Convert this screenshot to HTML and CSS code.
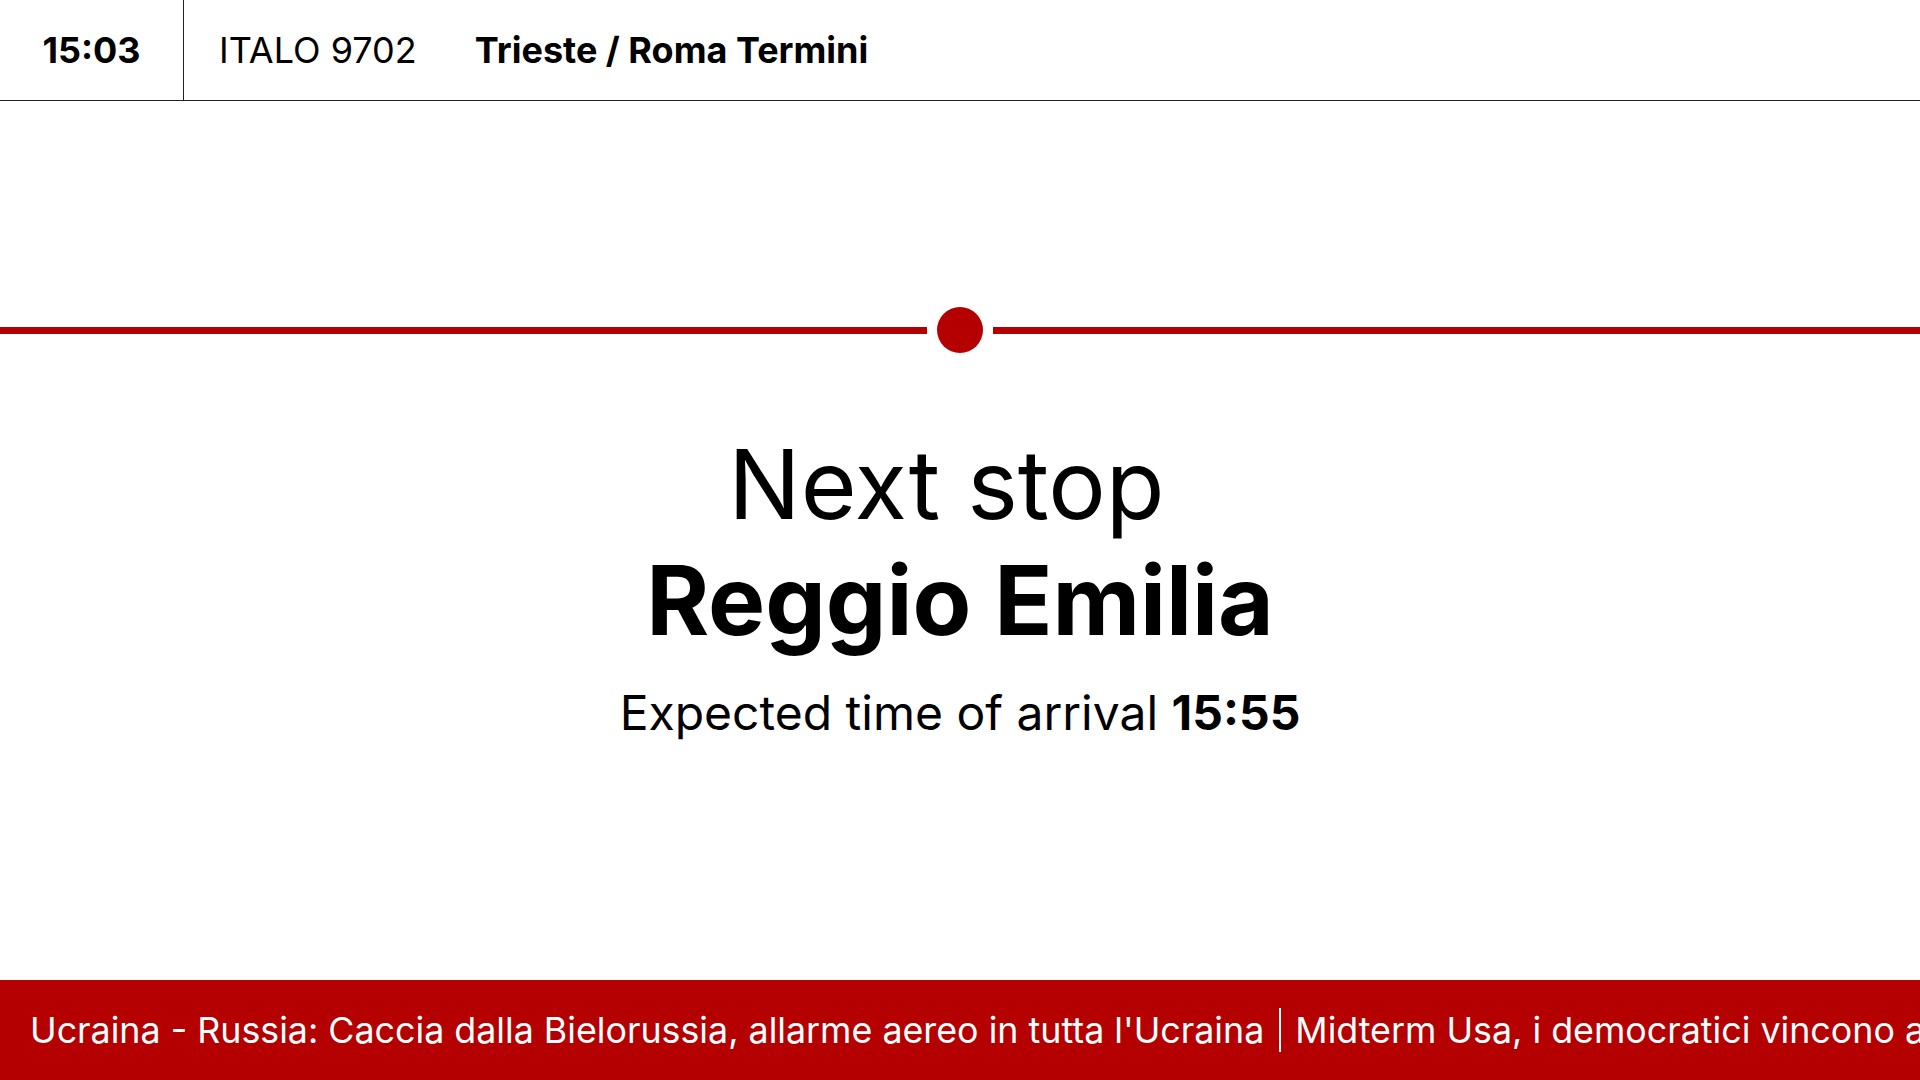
FILE: index.html
```html
<!DOCTYPE html>
<html lang="it">
<head>
<meta charset="utf-8">
<title>Next stop</title>
<link rel="stylesheet" href="styles.css">
</head>
<body>
<div class="screen">
  <header class="topbar">
    <div class="clock">15:03</div>
    <div class="train">
      <span class="train-no">ITALO 9702</span>
      <span class="route">Trieste / Roma Termini</span>
    </div>
  </header>
  <main class="main">
    <div class="track">
      <div class="track-line"></div>
      <div class="track-dot"></div>
      <div class="track-line"></div>
    </div>
    <div class="next">
      <div class="next-label">Next stop</div>
      <div class="next-name">Reggio Emilia</div>
      <div class="eta">Expected time of arrival <strong>15:55</strong></div>
    </div>
  </main>
  <footer class="ticker">
    <div class="ticker-track">
      <span class="news">Ucraina - Russia: Caccia dalla Bielorussia, allarme aereo in tutta l'Ucraina</span>
      <span class="news sep">Midterm Usa, i democratici vincono al Senato</span>
    </div>
  </footer>
</div>
</body>
</html>
```

FILE: styles.css
```css
* { box-sizing: border-box; }
html, body { margin: 0; padding: 0; }
body {
  font-family: Inter, "Noto Sans", sans-serif;
  color: #000;
  background: #fff;
}
.screen {
  width: 1920px;
  height: 1080px;
  display: flex;
  flex-direction: column;
  overflow: hidden;
}
.topbar {
  height: 101px;
  flex: none;
  display: flex;
  align-items: stretch;
  border-bottom: 1px solid #222;
}
.clock {
  width: 184px;
  border-right: 1px solid #222;
  display: flex;
  align-items: center;
  justify-content: center;
  font-size: 36px;
  font-weight: 700;
}
.train {
  display: flex;
  align-items: center;
  padding-left: 35px;
  gap: 58px;
  font-size: 36px;
}
.train-no { font-weight: 400; }
.route { font-weight: 700; }
.main {
  flex: 1;
  display: flex;
  flex-direction: column;
  align-items: center;
}
.track {
  width: 100%;
  margin-top: 206px;
  display: flex;
  align-items: center;
  height: 46px;
}
.track-line {
  flex: 1;
  height: 7px;
  background: #b40000;
}
.track-dot {
  width: 46px;
  height: 46px;
  border-radius: 50%;
  background: #b40000;
  margin: 0 10px;
}
.next {
  margin-top: 73px;
  text-align: center;
}
.next-label {
  font-size: 96px;
  line-height: 116px;
  font-weight: 400;
  padding-right: 27px;
}
.next-name {
  font-size: 96px;
  line-height: 116px;
  font-weight: 700;
}
.eta {
  margin-top: 26px;
  font-size: 48px;
  line-height: 58px;
}
.eta strong { font-weight: 700; }
.ticker {
  height: 100px;
  flex: none;
  background: #b40000;
  color: #fff;
  display: flex;
  align-items: center;
  overflow: hidden;
}
.ticker-track {
  display: flex;
  align-items: center;
  white-space: nowrap;
  padding-left: 30px;
  font-size: 35.8px;
}
.news.sep {
  border-left: 2px solid #fff;
  margin-left: 15px;
  padding-left: 14px;
  line-height: 44px;
}
```
